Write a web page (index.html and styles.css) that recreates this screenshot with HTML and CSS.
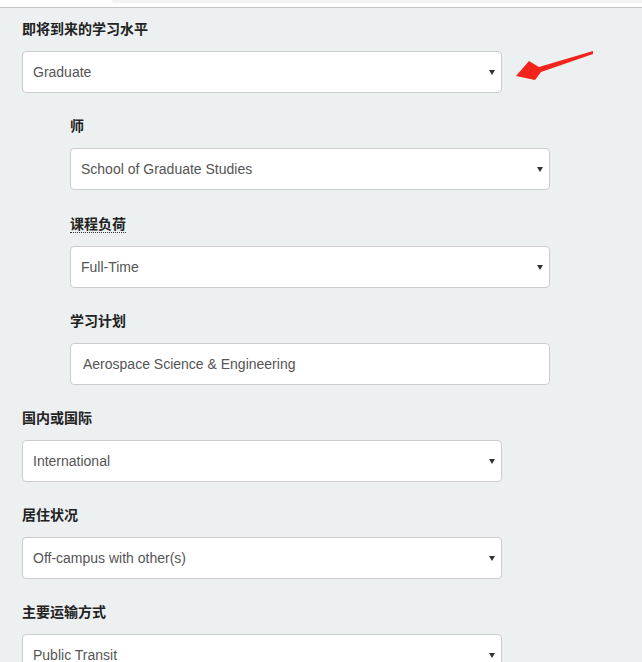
FILE: index.html
```html
<!DOCTYPE html>
<html lang="zh">
<head>
<meta charset="utf-8">
<title>Form</title>
<link rel="stylesheet" href="styles.css">
</head>
<body>
<div class="topbar"><div class="tab"></div></div>
<div class="form">
  <div class="group">
    <label class="lbl">即将到来的学习水平</label>
    <div class="sel"><select><option>Graduate</option></select></div>
  </div>
  <div class="nested">
    <div class="group">
      <label class="lbl">师</label>
      <div class="sel"><select><option>School of Graduate Studies</option></select></div>
    </div>
    <div class="group">
      <label class="lbl lbl-abbr"><abbr class="abbr">课程负荷</abbr></label>
      <div class="sel"><select><option>Full-Time</option></select></div>
    </div>
    <div class="group">
      <label class="lbl">学习计划</label>
      <input class="inp" type="text" value="Aerospace Science &amp; Engineering">
    </div>
  </div>
  <div class="group">
    <label class="lbl">国内或国际</label>
    <div class="sel"><select><option>International</option></select></div>
  </div>
  <div class="group">
    <label class="lbl">居住状况</label>
    <div class="sel"><select><option>Off-campus with other(s)</option></select></div>
  </div>
  <div class="group">
    <label class="lbl">主要运输方式</label>
    <div class="sel"><select><option>Public Transit</option></select></div>
  </div>
</div>
<svg class="arrow" width="642" height="662" viewBox="0 0 642 662">
  <polygon points="593,51 539,67 529,61 516,76 535,80 541,72 593,54" fill="#f4231c"/>
</svg>
</body>
</html>
```
FILE: styles.css
```css
html, body {
  margin: 0;
  padding: 0;
}
body {
  background: #ecf0f1;
  font-family: "Liberation Sans", Arial, "Noto Sans CJK SC", sans-serif;
  font-size: 14px;
  color: #333;
  position: relative;
  overflow: hidden;
  height: 662px;
}
.topbar {
  height: 7px;
  background: #ffffff;
  border-bottom: 1px solid #c4c4c4;
  padding-left: 112px;
}
.tab {
  height: 3px;
  background: #f3f3f3;
  border-bottom-left-radius: 6px;
}
.form {
  padding: 11px 0 0 22px;
  width: 480px;
}
.nested {
  margin-left: 48px;
}
.group {
  margin-bottom: 23px;
}
.lbl {
  display: block;
  font-family: "Liberation Sans", "Noto Sans CJK SC", sans-serif;
  font-weight: bold;
  font-size: 14px;
  line-height: 20px;
  color: #222;
  margin-bottom: 12px;
}
.lbl-abbr {
  padding-top: 1px;
}
.abbr {
  text-decoration: none;
  border-bottom: 1px dotted #333;
}
.sel {
  position: relative;
  width: 480px;
}
.sel::after {
  content: "";
  position: absolute;
  right: 7px;
  top: 19px;
  width: 0;
  height: 0;
  border-left: 3px solid transparent;
  border-right: 3px solid transparent;
  border-top: 5px solid #333;
  pointer-events: none;
}
select, .inp {
  display: block;
  box-sizing: border-box;
  width: 480px;
  height: 42px;
  margin: 0;
  background: #fff;
  border: 1px solid #cccccc;
  border-radius: 4px;
  font-family: "Liberation Sans", Arial, sans-serif;
  font-size: 14px;
  color: #555;
  outline: none;
}
select {
  -webkit-appearance: none;
  appearance: none;
  padding: 0 20px 0 10px;
}
.inp {
  padding: 0 12px;
}
.arrow {
  position: absolute;
  left: 0;
  top: 0;
  pointer-events: none;
}
```
